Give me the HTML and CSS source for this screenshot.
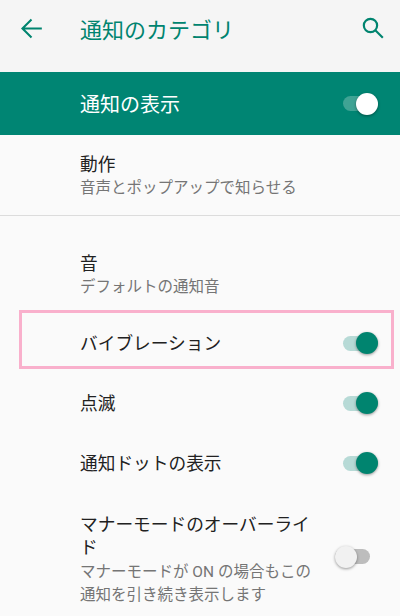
FILE: index.html
```html
<!DOCTYPE html>
<html lang="ja">
<head>
    <meta charset="UTF-8">
    <meta name="viewport" content="width=device-width, initial-scale=1.0">
    <title>通知のカテゴリ</title>
    <link rel="stylesheet" href="styles.css">
</head>
<body>

<div class="screen">
    <!-- Header -->
    <div class="app-bar">
        <svg class="back-icon" width="31" height="31" viewBox="0 0 24 24"><path d="M20 12H5.2M12 5l-7 7 7 7"/></svg>
        <h1>通知のカテゴリ</h1>
        <svg class="search-icon" width="29" height="29" viewBox="0 0 24 24"><circle cx="9.5" cy="9.5" r="5.5"/><path d="M13.7 13.7l6 6"/></svg>
    </div>

    <!-- Master switch -->
    <div class="master-row">
        <span>通知の表示</span>
        <div class="switch on master"><i></i></div>
    </div>

    <!-- Settings -->
    <div class="row first">
        <div class="text">
            <div class="title">動作</div>
            <div class="summary">音声とポップアップで知らせる</div>
        </div>
    </div>
    <div class="divider"></div>
    <div class="row sound">
        <div class="text">
            <div class="title">音</div>
            <div class="summary">デフォルトの通知音</div>
        </div>
    </div>
    <div class="row single highlighted">
        <div class="text"><div class="title">バイブレーション</div></div>
        <div class="switch on"><i></i></div>
    </div>
    <div class="row single">
        <div class="text"><div class="title">点滅</div></div>
        <div class="switch on"><i></i></div>
    </div>
    <div class="row single">
        <div class="text"><div class="title">通知ドットの表示</div></div>
        <div class="switch on"><i></i></div>
    </div>
    <div class="row override">
        <div class="text">
            <div class="title">マナーモードのオーバーライド</div>
            <div class="summary">マナーモードが ON の場合もこの通知を引き続き表示します</div>
        </div>
        <div class="switch off"><i></i></div>
    </div>
</div>

</body>
</html>
```

FILE: styles.css
```css
/* Global Styles */
html, body {
    margin: 0;
    padding: 0;
}
body {
    font-family: "Roboto", "Noto Sans CJK JP", sans-serif;
    background-color: #FAFAFA;
    color: #212121;
}
.screen {
    width: 400px;
    height: 616px;
    overflow: hidden;
}

/* Header */
.app-bar {
    display: flex;
    align-items: center;
    height: 72px;
    padding: 0 12px 16px 16px;
    box-sizing: border-box;
    background-color: #F5F5F5;
}
.app-bar svg {
    fill: none;
    stroke: #00846F;
}
.back-icon {
    stroke-width: 1.6;
}
.search-icon {
    stroke-width: 1.8;
}
.app-bar h1 {
    flex: 1;
    margin: 0 0 0 33px;
    font-size: 22px;
    font-weight: 400;
    color: #00846F;
}

/* Master switch */
.master-row {
    display: flex;
    align-items: center;
    justify-content: space-between;
    height: 63px;
    padding: 0 22px 0 80px;
    background-color: #008573;
    color: #FFF;
    font-size: 20px;
}

/* Rows */
.row {
    display: flex;
    align-items: center;
    justify-content: space-between;
    padding: 0 22px 0 80px;
    position: relative;
}
.first {
    height: 80px;
    padding-top: 2px;
    box-sizing: border-box;
}
.sound {
    height: 97px;
    padding-top: 22px;
    box-sizing: border-box;
}
.single {
    height: 60px;
}
.single .text {
    padding-top: 2px;
}
.title {
    font-size: 17.7px;
    line-height: 24px;
}
.summary {
    font-size: 15.5px;
    line-height: 23px;
    color: #757575;
}
.divider {
    height: 1px;
    background-color: #DCDCDC;
}
.highlighted::after {
    content: "";
    position: absolute;
    left: 19px;
    right: 6px;
    top: -3px;
    bottom: 4px;
    border: 3px solid #F9B0CC;
}
.override {
    padding-top: 21px;
    padding-right: 30px;
}
.override .text {
    width: 236px;
}
.override .switch {
    margin-top: -8px;
}
.override .title {
    line-height: 23px;
}
.override .summary {
    margin-top: 1px;
}

/* Switches */
.switch {
    position: relative;
    flex: none;
    width: 35px;
    height: 15px;
    border-radius: 8px;
}
.switch i {
    position: absolute;
    top: -3.5px;
    width: 22px;
    height: 22px;
    border-radius: 50%;
    box-shadow: 0 1px 3px rgba(0, 0, 0, 0.4);
}
.switch.on {
    background-color: #B7DAD6;
}
.switch.on i {
    right: 0;
    background-color: #00846F;
}
.switch.master {
    background-color: #3FA394;
}
.switch.master i {
    background-color: #FFF;
}
.switch.off {
    background-color: #BDBDBD;
}
.switch.off i {
    left: 0;
    background-color: #F1F1F1;
}
```
